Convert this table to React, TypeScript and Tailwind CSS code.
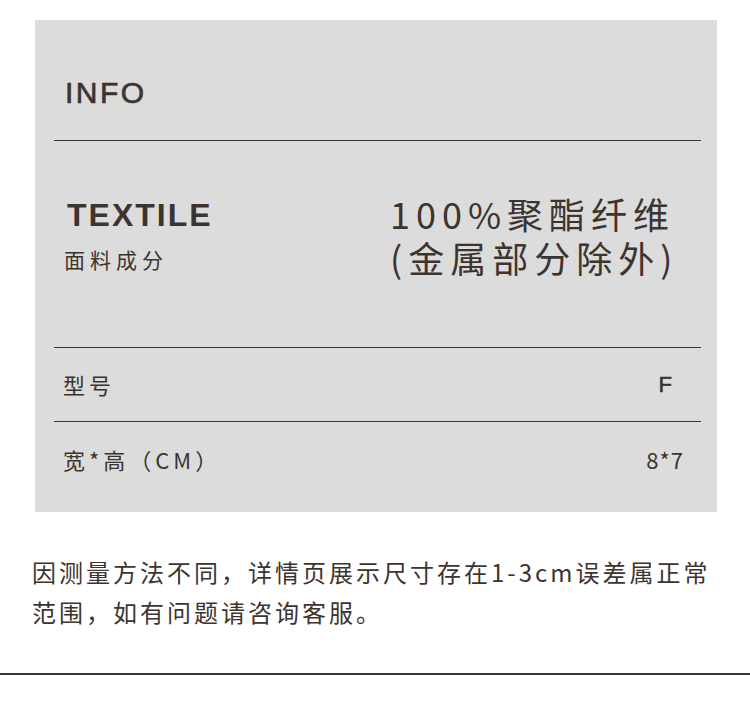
const INK = "text-[#3d342f]";

const SANS = "font-['Liberation_Sans','Noto_Sans_CJK_SC',sans-serif]";
const CJK = "font-['Noto_Sans_CJK_SC',sans-serif]";

const Divider = () => <div className="ml-[19px] mr-[16px] h-px bg-[#3d342f]" />;

const App = () => {
    return (
        <div className={"w-[750px] h-[703px] bg-white pt-[20px] " + INK}>
            {/* info panel */}
            <div className="ml-[35px] w-[682px] h-[492px] bg-[#dcdcdc] flex flex-col">
                <div className="h-[120px] pl-[30px] pt-[58px]">
                    <h2 className={SANS + " text-[30px] leading-[30px] tracking-[2.5px] [-webkit-text-stroke:0.7px_#3d342f]"}>INFO</h2>
                </div>
                <Divider />

                <div className="h-[206px] flex pt-[56px]">
                    <div className="w-[355px] pl-[32px]">
                        <div className={SANS + " text-[32px] leading-[36px] font-bold tracking-[2px]"}>TEXTILE</div>
                        <div className={CJK + " text-[21px] leading-[30px] tracking-[5px] mt-[11px] -ml-[3px]"}>面料成分</div>
                    </div>
                    <div className={CJK + " text-[36px] leading-[44px] tracking-[6px] -mt-[6px]"}>
                        <div>100%聚酯纤维</div>
                        <div>(金属部分除外)</div>
                    </div>
                </div>
                <Divider />

                <div className="h-[73px] flex items-center justify-between pl-[28px] pr-[45px]">
                    <span className={CJK + " text-[22px] tracking-[4px]"}>型号</span>
                    <span className={SANS + " text-[22px] [-webkit-text-stroke:0.6px_#3d342f]"}>F</span>
                </div>
                <Divider />

                <div className="h-[74px] flex items-center justify-between pl-[28px] pr-[33px]">
                    <span className={CJK + " text-[22px] tracking-[4px]"}>宽*高（CM）</span>
                    <span className={CJK + " text-[22px] tracking-[1px]"}>8*7</span>
                </div>
            </div>

            {/* note */}
            <p className={CJK + " mt-[40px] pl-[32px] text-[24px] leading-[40px] tracking-[3px]"}>
                因测量方法不同，详情页展示尺寸存在1-3cm误差属正常
                <br />
                范围，如有问题请咨询客服。
            </p>

            <div className="mt-[41px] h-[2px] bg-[#3d342f]" />
        </div>
    );
}

export default App;
